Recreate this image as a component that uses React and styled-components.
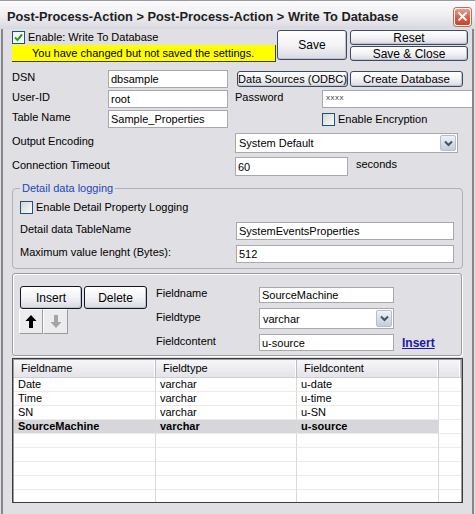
import React from 'react'
import styled, { createGlobalStyle } from 'styled-components'

const GlobalStyle = createGlobalStyle`
  html, body {
    margin: 0;
    padding: 0;
    background: #e0dfe3;
  }
  body {
    font-family: "Liberation Sans", Arial, sans-serif;
    font-size: 11px;
    color: #000;
  }
  * {
    box-sizing: border-box;
  }
`

const Window = styled.div`
  width: 475px;
  height: 514px;
  display: flex;
  flex-direction: column;
  background: #e0dfe3;
  overflow: hidden;
`

const TitleBar = styled.div`
  height: 29px;
  flex: none;
  display: flex;
  align-items: center;
  justify-content: space-between;
  padding: 3px 4px 0 7px;
  border-top: 1px solid #9c9ca4;
  background: linear-gradient(#fbfbfc, #f1f1f4 45%, #d8d8e0);
`

const Title = styled.div`
  font-size: 12.8px;
  font-weight: bold;
  color: #1e1e1e;
  white-space: nowrap;
`

const CloseButton = styled.div`
  width: 17px;
  height: 18px;
  border-radius: 3px;
  border: 1px solid #fff;
  box-shadow: 0 0 0 1px #c06a5a;
  background: linear-gradient(#ec9a86, #d8583c 60%, #c8452c);
  display: flex;
  align-items: center;
  justify-content: center;
`

const Body = styled.div`
  flex: 1;
  margin: 0 1px;
  border-left: 2px solid #85858d;
  border-right: 2px solid #85858d;
  padding: 1px 0 10px 9px;
  overflow: hidden;
`

const TopSection = styled.div`
  display: flex;
  align-items: flex-start;
  height: 32px;
`

const LeftCol = styled.div`
  width: 264px;
  display: flex;
  flex-direction: column;
`

const CheckRow = styled.div`
  height: 14px;
  display: flex;
  align-items: center;
  gap: 3px;
  margin-top: ${p => p.$mt || 0}px;
  margin-left: ${p => p.$ml || 0}px;
  white-space: nowrap;
`

const Box = styled.span`
  width: 13px;
  height: 13px;
  flex: none;
  border: 1px solid #1c5180;
  background: ${p => p.$checked
    ? 'linear-gradient(135deg, #f2f2ee, #fff)'
    : 'linear-gradient(135deg, #d6d6d0, #fbfbfb)'};
  display: flex;
  align-items: center;
  justify-content: center;
`

const Notice = styled.div`
  margin-top: 1px;
  height: 17px;
  padding-left: 20px;
  line-height: 16px;
  background: #ffff00;
  border-right: 1px solid #404040;
  border-bottom: 1px solid #404040;
  white-space: nowrap;
`

const Button = styled.div`
  width: ${p => p.$w}px;
  height: ${p => p.$h}px;
  margin-left: ${p => p.$ml || 0}px;
  flex: none;
  display: flex;
  align-items: center;
  justify-content: center;
  border: 1px solid ${p => p.$dark ? '#101828' : '#3d4a66'};
  border-radius: 3px;
  background: linear-gradient(#ffffff, #f3f3f6 50%, #d9d9e2);
  box-shadow: inset -1px -1px 0 #c2c2cc;
  font-size: ${p => p.$fs || 11}px;
  white-space: nowrap;
  overflow: hidden;
`

const RightStack = styled.div`
  margin-left: 3px;
  display: flex;
  flex-direction: column;
  gap: 1px;
`

const Row = styled.div`
  display: flex;
  align-items: center;
  height: ${p => p.$h}px;
  margin-top: ${p => p.$mt || 0}px;
`

const Label = styled.div`
  width: ${p => p.$w}px;
  margin-left: ${p => p.$ml || 0}px;
  flex: none;
  align-self: flex-start;
  line-height: 14px;
  padding-top: ${p => p.$pt || 0}px;
  white-space: nowrap;
`

const TextInput = styled.input`
  width: ${p => p.$w}px;
  height: 100%;
  flex: none;
  margin: 0;
  padding: 0 2px;
  border: 1px solid #a9a8ad;
  background: #fff;
  font-family: "Liberation Sans", Arial, sans-serif;
  font-size: 11px;
  color: #000;
  outline: none;
`

const Masked = styled.div`
  width: ${p => p.$w}px;
  height: 100%;
  flex: none;
  padding: 2px 0 0 3px;
  border: 1px solid #a9a8ad;
  background: #fff;
  font-size: 8px;
  color: #444;
  letter-spacing: 0.5px;
`

const Select = styled.div`
  width: ${p => p.$w}px;
  height: 100%;
  flex: none;
  display: flex;
  align-items: stretch;
  border: 1px solid #a9a8ad;
  background: #fff;
`

const SelectValue = styled.div`
  flex: 1;
  padding-left: 3px;
  display: flex;
  align-items: center;
`

const DropButton = styled.div`
  width: 16px;
  margin: 1px;
  border: 1px solid #b7bdcc;
  border-radius: 2px;
  background: linear-gradient(#eef1f8, #c6ccda);
  display: flex;
  align-items: center;
  justify-content: center;
`

const Unit = styled.div`
  margin-left: 8px;
  align-self: flex-start;
  line-height: 14px;
`

const Group = styled.fieldset`
  margin: 5px 0 0 0;
  width: 451px;
  padding: 0 7px 5px 7px;
  border: 1px solid #b0b0b8;
  border-radius: 4px;
`

const Legend = styled.legend`
  padding: 0 2px;
  line-height: 14px;
  color: #1c47c0;
`

const Panel = styled.div`
  margin-top: 4px;
  width: 450px;
  display: flex;
  padding: 12px 7px 4px 7px;
  border: 1px solid #9d9da6;
  border-radius: 3px;
  box-shadow: inset 1px 1px 0 #fff, 1px 1px 0 #fff;
`

const ButtonBlock = styled.div`
  width: 136px;
  flex: none;
  display: flex;
  flex-direction: column;
`

const ButtonLine = styled.div`
  display: flex;
  gap: 2px;
  margin-left: ${p => p.$ml || 0}px;
`

const ArrowButton = styled.div`
  width: ${p => p.$w}px;
  height: 25px;
  margin-left: ${p => p.$ml || 0}px;
  display: flex;
  align-items: center;
  justify-content: center;
  background: #ececee;
  border: 1px solid;
  border-color: #fff #9a9aa2 #9a9aa2 #fff;
`

const FieldGrid = styled.div`
  margin-top: 1px;
  display: grid;
  grid-template-columns: 103px 135px auto;
  grid-template-rows: 16px 21px 17px;
  row-gap: 5px;
`

const GridLabel = styled.div`
  line-height: 13px;
  padding-top: ${p => p.$pt || 0}px;
`

const LinkText = styled.a`
  margin-left: 8px;
  align-self: center;
  font-size: 12px;
  font-weight: bold;
  color: #1a1aa8;
  text-decoration: underline;
  cursor: pointer;
`

const ListBox = styled.div`
  margin-top: 2px;
  width: 451px;
  height: 145px;
  border: 1px solid #3c3c3c;
  padding: 1px;
  background: #fff;
  box-shadow: inset 0 0 0 1px #9a9aa0;
  overflow: hidden;
`

const ListLine = styled.div`
  display: grid;
  grid-template-columns: 142px 141px 142px 1fr;
  height: ${p => p.$h}px;
`

const HeadCell = styled.div`
  padding-left: 7px;
  line-height: 16px;
  background: linear-gradient(#f6f6f8, #e4e4e9);
  border-bottom: 1px solid #cfcfd6;
  border-right: 1px solid #bdbdc5;
  box-shadow: inset -1px 0 0 #fff;
`

const Cell = styled.div`
  padding-left: 4px;
  line-height: 13px;
  border-bottom: 1px solid #ebebeb;
  border-right: ${p => p.$last ? 'none' : '1px solid #dadada'};
  background: ${p => p.$selected ? '#d7d7db' : '#fff'};
  font-weight: ${p => p.$selected ? 'bold' : 'normal'};
  white-space: nowrap;
  overflow: hidden;
`

const Check = () => (
  <svg width="11" height="11" viewBox="0 0 11 11">
    <path d="M2 5.5 L4.5 8 L9 2.5" fill="none" stroke="#21a121" strokeWidth="2" />
  </svg>
)

const Chevron = () => (
  <svg width="9" height="7" viewBox="0 0 9 7">
    <path d="M1 1.5 L4.5 5 L8 1.5" fill="none" stroke="#4a5066" strokeWidth="2" />
  </svg>
)

const Arrow = ({ down, color }) => (
  <svg width="12" height="15" viewBox="0 0 12 15" style={{ transform: down ? 'rotate(180deg)' : 'none' }}>
    <path d="M6 1 L11.5 7 H8 V14 H4 V7 H0.5 Z" fill={color} />
  </svg>
)

const CheckBox = ({ checked, children, ...rest }) => (
  <CheckRow {...rest}>
    <Box $checked={checked}>{checked && <Check />}</Box>
    <span>{children}</span>
  </CheckRow>
)

const fields = [
  { name: 'Date', type: 'varchar', content: 'u-date' },
  { name: 'Time', type: 'varchar', content: 'u-time' },
  { name: 'SN', type: 'varchar', content: 'u-SN' },
  { name: 'SourceMachine', type: 'varchar', content: 'u-source', selected: true },
]

const App = () => {
  const rows = [...fields, ...Array(5).fill(null)]

  return (
    <Window>
      <GlobalStyle />
      <TitleBar>
        <Title>Post-Process-Action &gt; Post-Process-Action &gt; Write To Database</Title>
        <CloseButton>
          <svg width="11" height="11" viewBox="0 0 11 11">
            <path d="M1.5 1.5 L9.5 9.5 M9.5 1.5 L1.5 9.5" stroke="#fff" strokeWidth="2" />
          </svg>
        </CloseButton>
      </TitleBar>

      <Body>
        <TopSection>
          <LeftCol>
            <CheckBox checked>Enable: Write To Database</CheckBox>
            <Notice>You have changed but not saved the settings.</Notice>
          </LeftCol>
          <Button $w={70} $h={30} $ml={1} $fs={12}>Save</Button>
          <RightStack>
            <Button $w={118} $h={15} $fs={12}>Reset</Button>
            <Button $w={118} $h={15} $fs={12}>Save &amp; Close</Button>
          </RightStack>
        </TopSection>

        <Row $h={18} $mt={8}>
          <Label $w={96}>DSN</Label>
          <TextInput $w={120} defaultValue="dbsample" />
          <ButtonLine $ml={9}>
            <Button $w={111} $h={16} $fs={11}>Data Sources (ODBC)</Button>
            <Button $w={113} $h={16} $fs={11.5}>Create Database</Button>
          </ButtonLine>
        </Row>
        <Row $h={18} $mt={2}>
          <Label $w={96}>User-ID</Label>
          <TextInput $w={120} defaultValue="root" />
          <Label $w={87} $ml={7}>Password</Label>
          <Masked $w={152}>xxxx</Masked>
        </Row>
        <Row $h={18} $mt={2}>
          <Label $w={96}>Table Name</Label>
          <TextInput $w={120} defaultValue="Sample_Properties" />
          <CheckBox $ml={94}>Enable Encryption</CheckBox>
        </Row>
        <Row $h={20} $mt={5}>
          <Label $w={223} $pt={1}>Output Encoding</Label>
          <Select $w={223}>
            <SelectValue>System Default</SelectValue>
            <DropButton><Chevron /></DropButton>
          </Select>
        </Row>
        <Row $h={19} $mt={4}>
          <Label $w={223} $pt={1}>Connection Timeout</Label>
          <TextInput $w={113} defaultValue="60" />
          <Unit>seconds</Unit>
        </Row>

        <Group>
          <Legend>Detail data logging</Legend>
          <CheckBox $mt={5}>Enable Detail Property Logging</CheckBox>
          <Row $h={18} $mt={8}>
            <Label $w={216}>Detail data TableName</Label>
            <TextInput $w={218} defaultValue="SystemEventsProperties" />
          </Row>
          <Row $h={18} $mt={5}>
            <Label $w={216}>Maximum value lenght (Bytes):</Label>
            <TextInput $w={218} defaultValue="512" />
          </Row>
        </Group>

        <Panel>
          <ButtonBlock>
            <ButtonLine>
              <Button $w={62} $h={23} $dark $fs={12}>Insert</Button>
              <Button $w={63} $h={23} $dark $fs={12}>Delete</Button>
            </ButtonLine>
            <ButtonLine $ml={-1}>
              <ArrowButton $w={24}><Arrow color="#000" /></ArrowButton>
              <ArrowButton $w={25} $ml={-2}><Arrow down color="#a4a4a8" /></ArrowButton>
            </ButtonLine>
          </ButtonBlock>
          <FieldGrid>
            <GridLabel>Fieldname</GridLabel>
            <TextInput $w={135} defaultValue="SourceMachine" />
            <span />
            <GridLabel $pt={3}>Fieldtype</GridLabel>
            <Select $w={135}>
              <SelectValue>varchar</SelectValue>
              <DropButton><Chevron /></DropButton>
            </Select>
            <span />
            <GridLabel $pt={1}>Fieldcontent</GridLabel>
            <TextInput $w={135} defaultValue="u-source" />
            <LinkText>Insert</LinkText>
          </FieldGrid>
        </Panel>

        <ListBox>
          <ListLine $h={18}>
            <HeadCell>Fieldname</HeadCell>
            <HeadCell>Fieldtype</HeadCell>
            <HeadCell>Fieldcontent</HeadCell>
            <HeadCell />
          </ListLine>
          {rows.map((r, i) => (
            <ListLine key={i} $h={14}>
              <Cell $selected={r && r.selected}>{r ? r.name : ''}</Cell>
              <Cell $selected={r && r.selected}>{r ? r.type : ''}</Cell>
              <Cell $selected={r && r.selected}>{r ? r.content : ''}</Cell>
              <Cell $last />
            </ListLine>
          ))}
        </ListBox>
      </Body>
    </Window>
  )
}

export default App
